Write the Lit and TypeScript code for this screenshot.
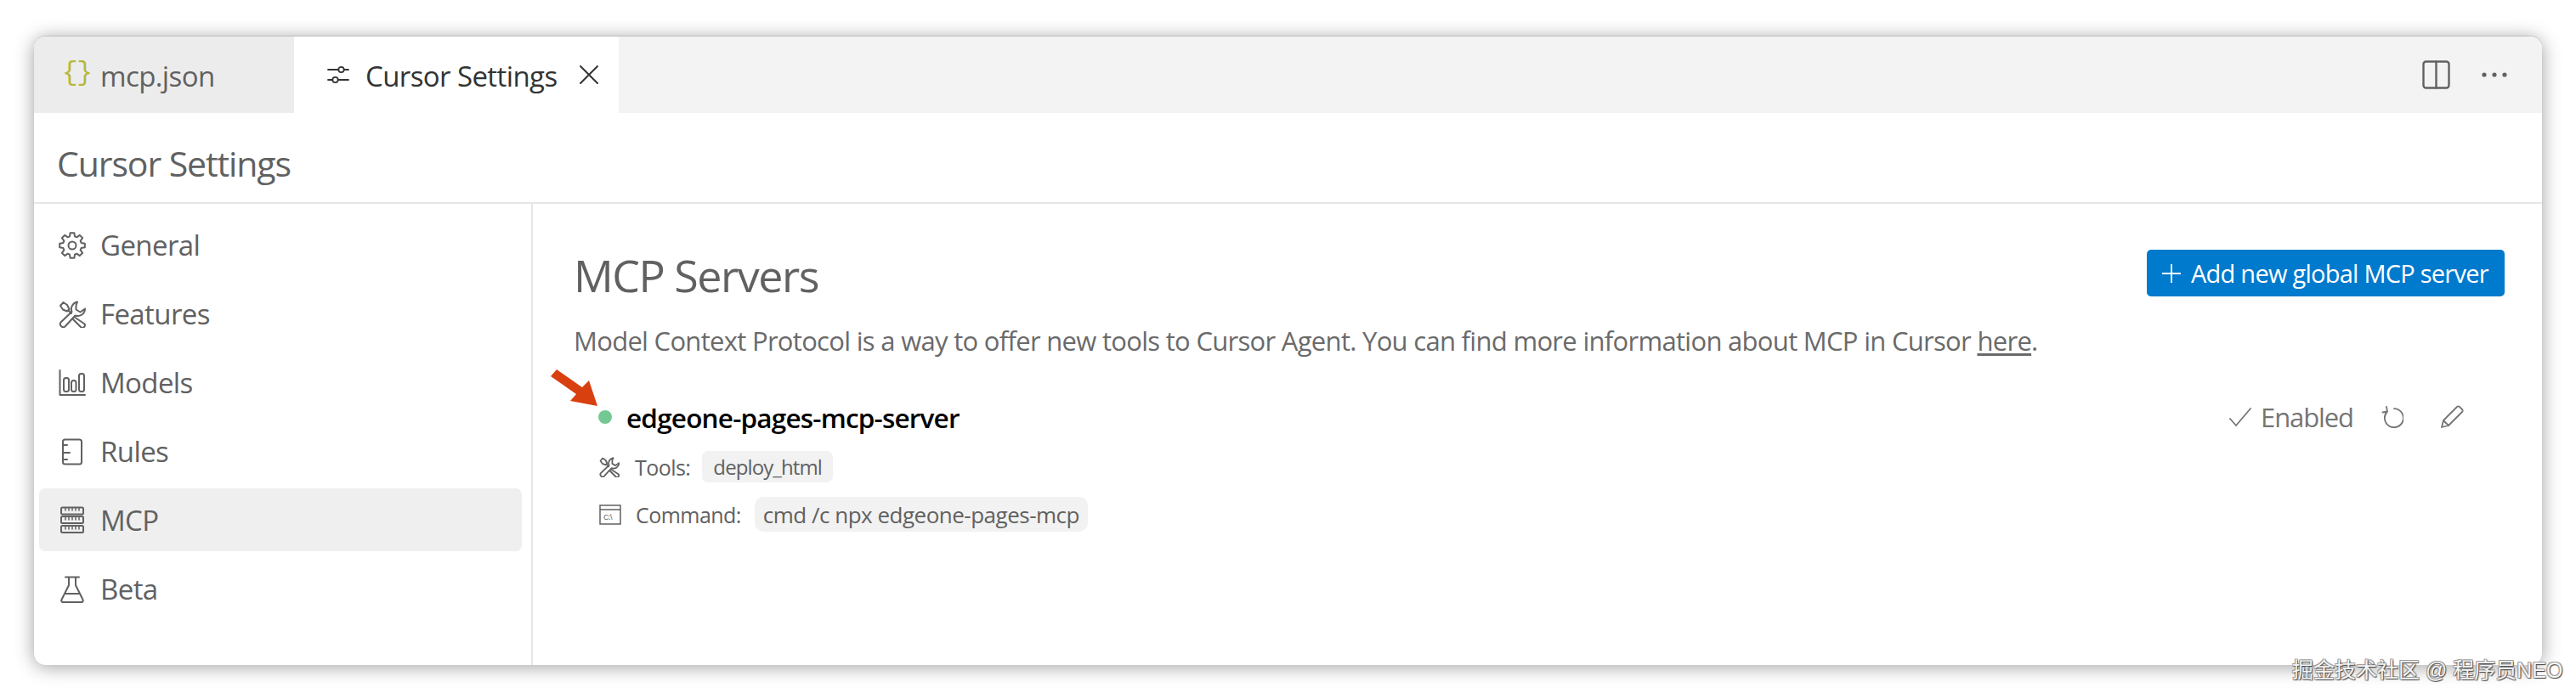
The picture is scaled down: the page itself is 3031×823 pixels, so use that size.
import { LitElement, html, css, svg } from "lit";
import { customElement } from "lit/decorators.js";

function gearPath(cx: number, cy: number, ro: number, ri: number, teeth: number) {
  const pts: string[] = [];
  const step = (Math.PI * 2) / teeth;
  for (let i = 0; i < teeth; i++) {
    const a = i * step - Math.PI / 2;
    const seq: [number, number][] = [
      [ri, a - step * 0.36],
      [ro, a - step * 0.2],
      [ro, a + step * 0.2],
      [ri, a + step * 0.36],
    ];
    for (const [r, t] of seq) {
      pts.push(`${(cx + r * Math.cos(t)).toFixed(2)} ${(cy + r * Math.sin(t)).toFixed(2)}`);
    }
  }
  return "M" + pts.join(" L") + " Z";
}

const ic = (w: number, h: number, body: unknown, cls = "") =>
  html`<svg class="ic ${cls}" width=${w} height=${h} viewBox="0 0 ${w} ${h}" fill="none" stroke="currentColor" stroke-width="2" stroke-linejoin="round" stroke-linecap="round">${body}</svg>`;

const gear = ic(32, 32, svg`<path d=${gearPath(16, 16, 15, 11, 8)} /><circle cx="16" cy="16" r="4.5"/>`);
const tools = (s: number, sw = 2) =>
  html`<svg class="ic" width=${s} height=${s} viewBox="0 0 32 32" fill="none" stroke="currentColor" stroke-width=${sw} stroke-linejoin="round" stroke-linecap="round">
    <path d="M22 1.5 a8.5 8.5 0 0 0 -6.5 11.5 L2.5 25.5 a3.6 3.6 0 0 0 5 5 L19.5 17.5 a8.5 8.5 0 0 0 11.5 -8 l-5.5 4 l-5 -3 l0 -5 z"/>
    <path d="M2 6 l3.5 -4 l4.5 3 l2.5 5 l-2.5 2.5 l-5 -2 z M12.5 12.5 L15 15"/>
    <path d="M19.5 20 L30 27 a2.7 2.7 0 0 1 -4 4 L17 22"/>
  </svg>`;
const chart = ic(32, 32, svg`<path d="M1.5 1 V30 H31"/><rect x="6" y="10" width="6" height="16" rx="2.5"/><rect x="15" y="13" width="5.5" height="13" rx="2.5"/><rect x="24" y="5" width="6" height="21" rx="2.5"/>`);
const rules = ic(32, 32, svg`<rect x="5" y="1.5" width="22" height="29" rx="2.5"/><path d="M5 8 H10 M5 17 H13 M5 25 H10"/>`);
const server = ic(32, 32, svg`<rect x="3" y="1.5" width="26" height="8" rx="1.5"/><rect x="3" y="12" width="26" height="8" rx="1.5"/><rect x="3" y="23" width="26" height="8" rx="1.5"/><path stroke-width="1.5" d="M8 2 V5 M12 2 V5 M16 2 V5 M20 2 V5 M24 2 V5 M8 13 V16 M12 13 V16 M16 13 V16 M20 13 V16 M24 13 V16 M8 24 V27 M12 24 V27 M16 24 V27 M20 24 V27 M24 24 V27"/>`);
const flask = ic(32, 32, svg`<path d="M8 1.5 H24 M12 1.5 V11 L3.5 28 a2 2 0 0 0 2 3 H26.5 a2 2 0 0 0 2 -3 L20 11 V1.5 M7.5 21 H24.5"/>`);

const NAV = [
  { icon: gear, label: "General" },
  { icon: tools(32), label: "Features" },
  { icon: chart, label: "Models" },
  { icon: rules, label: "Rules" },
  { icon: server, label: "MCP", active: true },
  { icon: flask, label: "Beta" },
];

@customElement("app-root")
export class AppRoot extends LitElement {
  static styles = css`
    :host {
      display: block;
      position: relative;
      height: 823px;
      overflow: hidden;
      background: #fff;
      font-family: "Open Sans", "Noto Sans", sans-serif;
      color: #616161;
      padding: 43px 40px 0;
      box-sizing: border-box;
    }
    .ic { display: block; flex: none; }
    .win {
      height: 740px;
      background: #fff;
      border-radius: 14px;
      box-shadow: 0 2px 22px rgba(0, 0, 0, 0.38), 0 -1px 1px rgba(0, 0, 0, 0.12);
      overflow: hidden;
      display: flex;
      flex-direction: column;
    }
    .tabs {
      height: 90px;
      flex: none;
      background: #f3f3f3;
      display: flex;
      align-items: stretch;
      box-sizing: border-box;
    }
    .tab {
      display: flex;
      align-items: center;
      font-size: 33px;
      letter-spacing: -0.6px;
    }
    .tab span { padding-top: 2px; }
    .tab.a {
      width: 306px;
      background: #ececec;
      padding-left: 33px;
      box-sizing: border-box;
    }
    .tab .brace {
      font-family: "Liberation Mono", monospace;
      font-weight: 400;
      font-size: 31px;
      color: #b5b83c;
      width: 45px;
      letter-spacing: -10px;
      padding: 0 0 6px;
    }
    .tab.b {
      width: 382px;
      background: #fff;
      color: #333;
      padding-left: 39px;
      box-sizing: border-box;
    }
    .tab.b .name { margin-left: 19px; margin-right: 25px; }
    .spacer { flex: 1; }
    .actions {
      display: flex;
      align-items: center;
      gap: 37px;
      padding-right: 41px;
      color: #616161;
    }
    .title {
      height: 107px;
      flex: none;
      box-sizing: border-box;
      border-bottom: 2px solid #e6e6e6;
      padding: 13px 0 0 27px;
      display: flex;
      align-items: center;
      font-size: 41px;
      letter-spacing: -1.1px;
    }
    .body { flex: 1; display: flex; min-height: 0; position: relative; }
    .side {
      width: 587px;
      flex: none;
      box-sizing: border-box;
      border-right: 2px solid #e6e6e6;
      padding: 8px 11px 0 6px;
      display: flex;
      flex-direction: column;
    }
    .item {
      height: 81px;
      display: flex;
      align-items: center;
      gap: 17px;
      padding-left: 23px;
      font-size: 33px;
      letter-spacing: -0.6px;
      border-radius: 7px;
      box-sizing: border-box;
    }
    .item.on { background: #efefef; height: 74px; margin: 3px 0 4px; }
    .main {
      flex: 1;
      padding: 54px 44px 0 48px;
      display: flex;
      flex-direction: column;
      position: relative;
    }
    .head { display: flex; justify-content: space-between; align-items: flex-start; height: 55px; }
    h1 {
      margin: 0;
      font-weight: 400;
      font-size: 52px;
      line-height: 60px;
      letter-spacing: -1.5px;
    }
    .btn {
      width: 421px;
      height: 55px;
      background: #007acc;
      border-radius: 5px;
      color: #fff;
      display: flex;
      align-items: center;
      gap: 12px;
      padding-left: 18px;
      box-sizing: border-box;
      font-size: 29px;
      letter-spacing: -0.75px;
    }
    .desc {
      margin: 32px 0 0;
      font-size: 31px;
      line-height: 40px;
      letter-spacing: -0.7px;
      color: #6a6a6a;
    }
    .desc u { text-underline-offset: 3px; }
    .srv {
      display: flex;
      align-items: center;
      margin: 49px 48px 0 29px;
      height: 42px;
    }
    .dot { width: 16px; height: 16px; border-radius: 50%; background: #73c991; margin-right: 17px; flex: none; }
    .sname { font-size: 31.5px; font-weight: 600; color: #000; letter-spacing: -0.8px; flex: 1; }
    .en { display: flex; align-items: center; color: #757575; font-size: 31px; letter-spacing: -1.1px; }
    .en .lbl { margin: 0 33px 0 11px; }
    .en .pen { margin-left: 43px; }
    .row {
      display: flex;
      align-items: center;
      margin-left: 30px;
      font-size: 25px;
      letter-spacing: -0.55px;
    }
    .row.r1 { margin-top: 19px; height: 37px; }
    .row.r2 { margin-top: 17px; height: 41px; }
    .row .k { margin-left: 17px; }
    .row.r1 .k { margin-left: 18px; }
    .chip {
      background: #f2f2f2;
      border-radius: 7px;
      height: 100%;
      display: flex;
      align-items: center;
      box-sizing: border-box;
      padding: 0 13px;
      margin-left: 14px;
      font-size: 24px;
      letter-spacing: -0.9px;
    }
    .row.r2 .chip { padding: 0 10px; margin-left: 16px; border-radius: 10px; font-size: 26px; letter-spacing: -0.5px; }
    .arrow { position: absolute; left: 21px; top: 195px; }
    .wm {
      position: absolute;
      left: 2697px;
      top: 771px;
      font-family: "Liberation Sans", "Noto Sans CJK SC", sans-serif;
      font-size: 25px;
      line-height: 36px;
      white-space: nowrap;
      color: #f4f4f4;
      text-shadow: 1px 1px 1px #444, -1px -1px 0 #999, 1px -1px 0 #aaa, -1px 1px 0 #aaa;
    }
  `;

  render() {
    return html`
      <div class="win">
        <div class="tabs">
          <div class="tab a"><span class="brace">{ }</span><span>mcp.json</span></div>
          <div class="tab b">
            ${ic(26, 24, svg`<g stroke-width="1.8"><path d="M1 6 H13 M20 6 H25 M1 18 H6 M13 18 H25"/><circle cx="16.5" cy="6" r="3.2"/><circle cx="9.5" cy="18" r="3.2"/></g>`)}
            <span class="name">Cursor Settings</span>
            ${ic(24, 24, svg`<path d="M2 2 L22 22 M22 2 L2 22"/>`)}
          </div>
          <div class="spacer"></div>
          <div class="actions">
            ${ic(33, 34, svg`<g stroke-width="2.4"><rect x="1.5" y="1.5" width="30" height="31" rx="3"/><path d="M16.5 1.5 V32.5"/></g>`)}
            ${ic(30, 6, svg`<circle cx="3" cy="3" r="2.6" fill="currentColor" stroke="none"/><circle cx="15" cy="3" r="2.6" fill="currentColor" stroke="none"/><circle cx="27" cy="3" r="2.6" fill="currentColor" stroke="none"/>`)}
          </div>
        </div>
        <div class="title">Cursor Settings</div>
        <div class="body">
          <div class="side">
            ${NAV.map(
              (n) => html`<div class="item ${n.active ? "on" : ""}">${n.icon}<span>${n.label}</span></div>`
            )}
          </div>
          <div class="main">
            <svg class="arrow" width="56" height="44" viewBox="0 0 56 44">
              <polygon fill="#d9400f" points="0,8 7,0 37,21 45,13 55,43 23,37 30,29" />
            </svg>
            <div class="head">
              <h1>MCP Servers</h1>
              <div class="btn">
                ${ic(22, 22, svg`<path stroke-width="1.8" d="M11 0.5 V21.5 M0.5 11 H21.5"/>`)}
                <span>Add new global MCP server</span>
              </div>
            </div>
            <p class="desc">
              Model Context Protocol is a way to offer new tools to Cursor Agent. You can find more information about MCP in Cursor <u>here</u>.
            </p>
            <div class="srv">
              <span class="dot"></span>
              <span class="sname">edgeone-pages-mcp-server</span>
              <div class="en">
                ${ic(26, 22, svg`<path stroke-width="1.8" d="M1 13 L8 21 L25 1"/>`)}
                <span class="lbl">Enabled</span>
                ${ic(26, 26, svg`<path stroke-width="1.8" d="M6 1 L7 6.5 L1.5 7.5 M7 6.5 A11 11 0 1 0 15 3.2"/>`)}
                <span class="pen">${ic(28, 28, svg`<path stroke-width="1.8" d="M2 26 L4 18 L20 2 a2 2 0 0 1 3 0 L26 5 a2 2 0 0 1 0 3 L10 24 Z M4 18 L10 24"/>`)}</span>
              </div>
            </div>
            <div class="row r1">
              ${tools(24, 2.4)}
              <span class="k">Tools:</span>
              <span class="chip">deploy_html</span>
            </div>
            <div class="row r2">
              <svg class="ic" width="26" height="24" viewBox="0 0 26 24" fill="none" stroke="currentColor" stroke-width="1.5">
                <rect x="1" y="1" width="24" height="22"/><path d="M1 6 H25"/>
                <text x="5" y="18" font-size="9" fill="currentColor" stroke="none" font-family="Liberation Sans">C:\\</text>
              </svg>
              <span class="k">Command:</span>
              <span class="chip">cmd /c npx edgeone-pages-mcp</span>
            </div>
          </div>
        </div>
      </div>
      <div class="wm">掘金技术社区 @ 程序员NEO</div>
    `;
  }
}
